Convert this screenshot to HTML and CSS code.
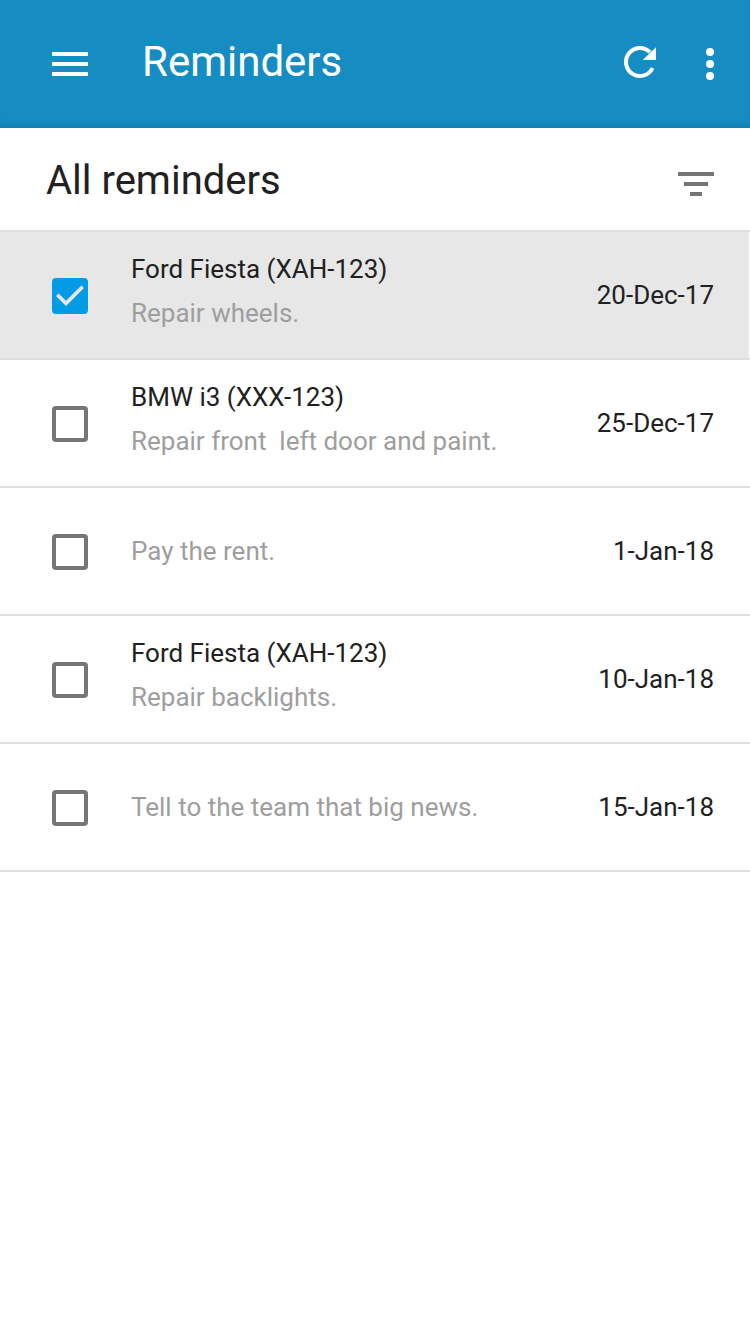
FILE: index.html
```html
<!DOCTYPE html>
<html lang="en">
<head>
<meta charset="utf-8">
<meta name="viewport" content="width=device-width, initial-scale=1">
<title>Reminders</title>
<link rel="stylesheet" href="styles.css">
</head>
<body>
<header class="app-bar">
  <button class="icon-button" type="button" aria-label="Menu">
    <svg class="icon" viewBox="0 0 24 24"><path d="M3 18h18v-2H3v2zm0-5h18v-2H3v2zm0-7v2h18V6H3z"/></svg>
  </button>
  <h1 class="app-title">Reminders</h1>
  <button class="icon-button" type="button" aria-label="Refresh">
    <svg class="icon" viewBox="0 0 24 24"><path d="M18.3 14A7 7 0 1 1 16.95 6.05" fill="none" stroke="currentColor" stroke-width="2"/><path d="M20 3.6V10h-6.7z"/></svg>
  </button>
  <button class="icon-button" type="button" aria-label="More options">
    <svg class="icon" viewBox="0 0 24 24"><path d="M12 8a2 2 0 1 0 0-4 2 2 0 0 0 0 4zm0 2a2 2 0 1 0 0 4 2 2 0 0 0 0-4zm0 6a2 2 0 1 0 0 4 2 2 0 0 0 0-4z"/></svg>
  </button>
</header>
<main>
  <div class="list-header">
    <h2 class="list-title">All reminders</h2>
    <button class="icon-button filter-button" type="button" aria-label="Filter">
      <svg class="icon" viewBox="0 0 24 24"><path d="M9 18h6v-2H9v2zM3 6v2h18V6H3zm3 7h12v-2H6v2z"/></svg>
    </button>
  </div>
  <ul class="reminders">
    <li><label class="reminder">
      <span class="checkbox"><input class="check" type="checkbox" checked><svg class="tick" viewBox="0 0 36 36"><path d="M14 28 4 18l2.6-2.6 7.4 7.4L29.4 7.4 32 10z"/></svg></span>
      <span class="details"><span class="vehicle">Ford Fiesta (XAH-123)</span><span class="note">Repair wheels.</span></span>
      <time class="date" datetime="2017-12-20">20-Dec-17</time>
    </label></li>
    <li><label class="reminder">
      <span class="checkbox"><input class="check" type="checkbox"><svg class="tick" viewBox="0 0 36 36"><path d="M14 28 4 18l2.6-2.6 7.4 7.4L29.4 7.4 32 10z"/></svg></span>
      <span class="details"><span class="vehicle">BMW i3 (XXX-123)</span><span class="note">Repair front  left door and paint.</span></span>
      <time class="date" datetime="2017-12-25">25-Dec-17</time>
    </label></li>
    <li><label class="reminder">
      <span class="checkbox"><input class="check" type="checkbox"><svg class="tick" viewBox="0 0 36 36"><path d="M14 28 4 18l2.6-2.6 7.4 7.4L29.4 7.4 32 10z"/></svg></span>
      <span class="details"><span class="note">Pay the rent.</span></span>
      <time class="date" datetime="2018-01-01">1-Jan-18</time>
    </label></li>
    <li><label class="reminder">
      <span class="checkbox"><input class="check" type="checkbox"><svg class="tick" viewBox="0 0 36 36"><path d="M14 28 4 18l2.6-2.6 7.4 7.4L29.4 7.4 32 10z"/></svg></span>
      <span class="details"><span class="vehicle">Ford Fiesta (XAH-123)</span><span class="note">Repair backlights.</span></span>
      <time class="date" datetime="2018-01-10">10-Jan-18</time>
    </label></li>
    <li><label class="reminder">
      <span class="checkbox"><input class="check" type="checkbox"><svg class="tick" viewBox="0 0 36 36"><path d="M14 28 4 18l2.6-2.6 7.4 7.4L29.4 7.4 32 10z"/></svg></span>
      <span class="details"><span class="note">Tell to the team that big news.</span></span>
      <time class="date" datetime="2018-01-15">15-Jan-18</time>
    </label></li>
  </ul>
</main>
</body>
</html>
```
FILE: styles.css
```css
* {
  box-sizing: border-box;
}

body {
  margin: 0;
  background: #fff;
  color: #212121;
  font-family: Roboto, "Noto Sans", sans-serif;
}

.app-bar {
  display: flex;
  align-items: center;
  min-height: 128px;
  padding: 0 16px 0 46px;
  background: #158dc3;
  box-shadow: inset 0 -6px 6px -4px rgba(0, 0, 0, 0.14);
  color: #fff;
}

.icon-button {
  display: flex;
  padding: 0;
  border: 0;
  background: none;
  color: inherit;
}

.icon-button + .icon-button {
  margin-left: 22px;
}

.icon {
  width: 48px;
  height: 48px;
  fill: currentColor;
}

.app-title {
  flex: 1;
  margin: 0;
  padding: 0 0 4px 48px;
  font-size: 42px;
  font-weight: 400;
  line-height: 48px;
}

.list-header {
  display: flex;
  align-items: center;
  justify-content: space-between;
  min-height: 104px;
  padding: 4px 30px 0 46px;
  border-bottom: 2px solid #dedede;
}

.list-title {
  margin: 0;
  font-size: 40px;
  font-weight: 400;
  line-height: 48px;
}

.filter-button {
  padding-top: 6px;
  color: #757575;
}

.reminders {
  margin: 0;
  padding: 0;
  list-style: none;
}

.reminder {
  display: flex;
  align-items: center;
  min-height: 128px;
  padding: 0 36px 0 52px;
  border-bottom: 2px solid #dedede;
  font-size: 26px;
  line-height: 32px;
}

.reminder:has(.check:checked) {
  background: #e7e7e7;
  box-shadow: inset -1px 0 #fff;
}

.checkbox {
  display: grid;
  margin-top: 2px;
}

.check,
.tick {
  grid-area: 1 / 1;
  width: 36px;
  height: 36px;
}

.check {
  appearance: none;
  margin: 0;
  border: 4px solid #757575;
  border-radius: 4px;
}

.check:checked {
  border-color: #039be5;
  background: #039be5;
}

.tick {
  z-index: 1;
  fill: #e7e7e7;
  pointer-events: none;
  visibility: hidden;
}

.check:checked + .tick {
  visibility: visible;
}

.details {
  display: flex;
  flex: 1;
  flex-direction: column;
  gap: 12px;
  padding: 0 24px 0 43px;
}

.details:has(.vehicle) {
  padding-bottom: 8px;
}

.note {
  color: #9e9e9e;
  white-space: pre-wrap;
}

.date {
  white-space: nowrap;
}
```
